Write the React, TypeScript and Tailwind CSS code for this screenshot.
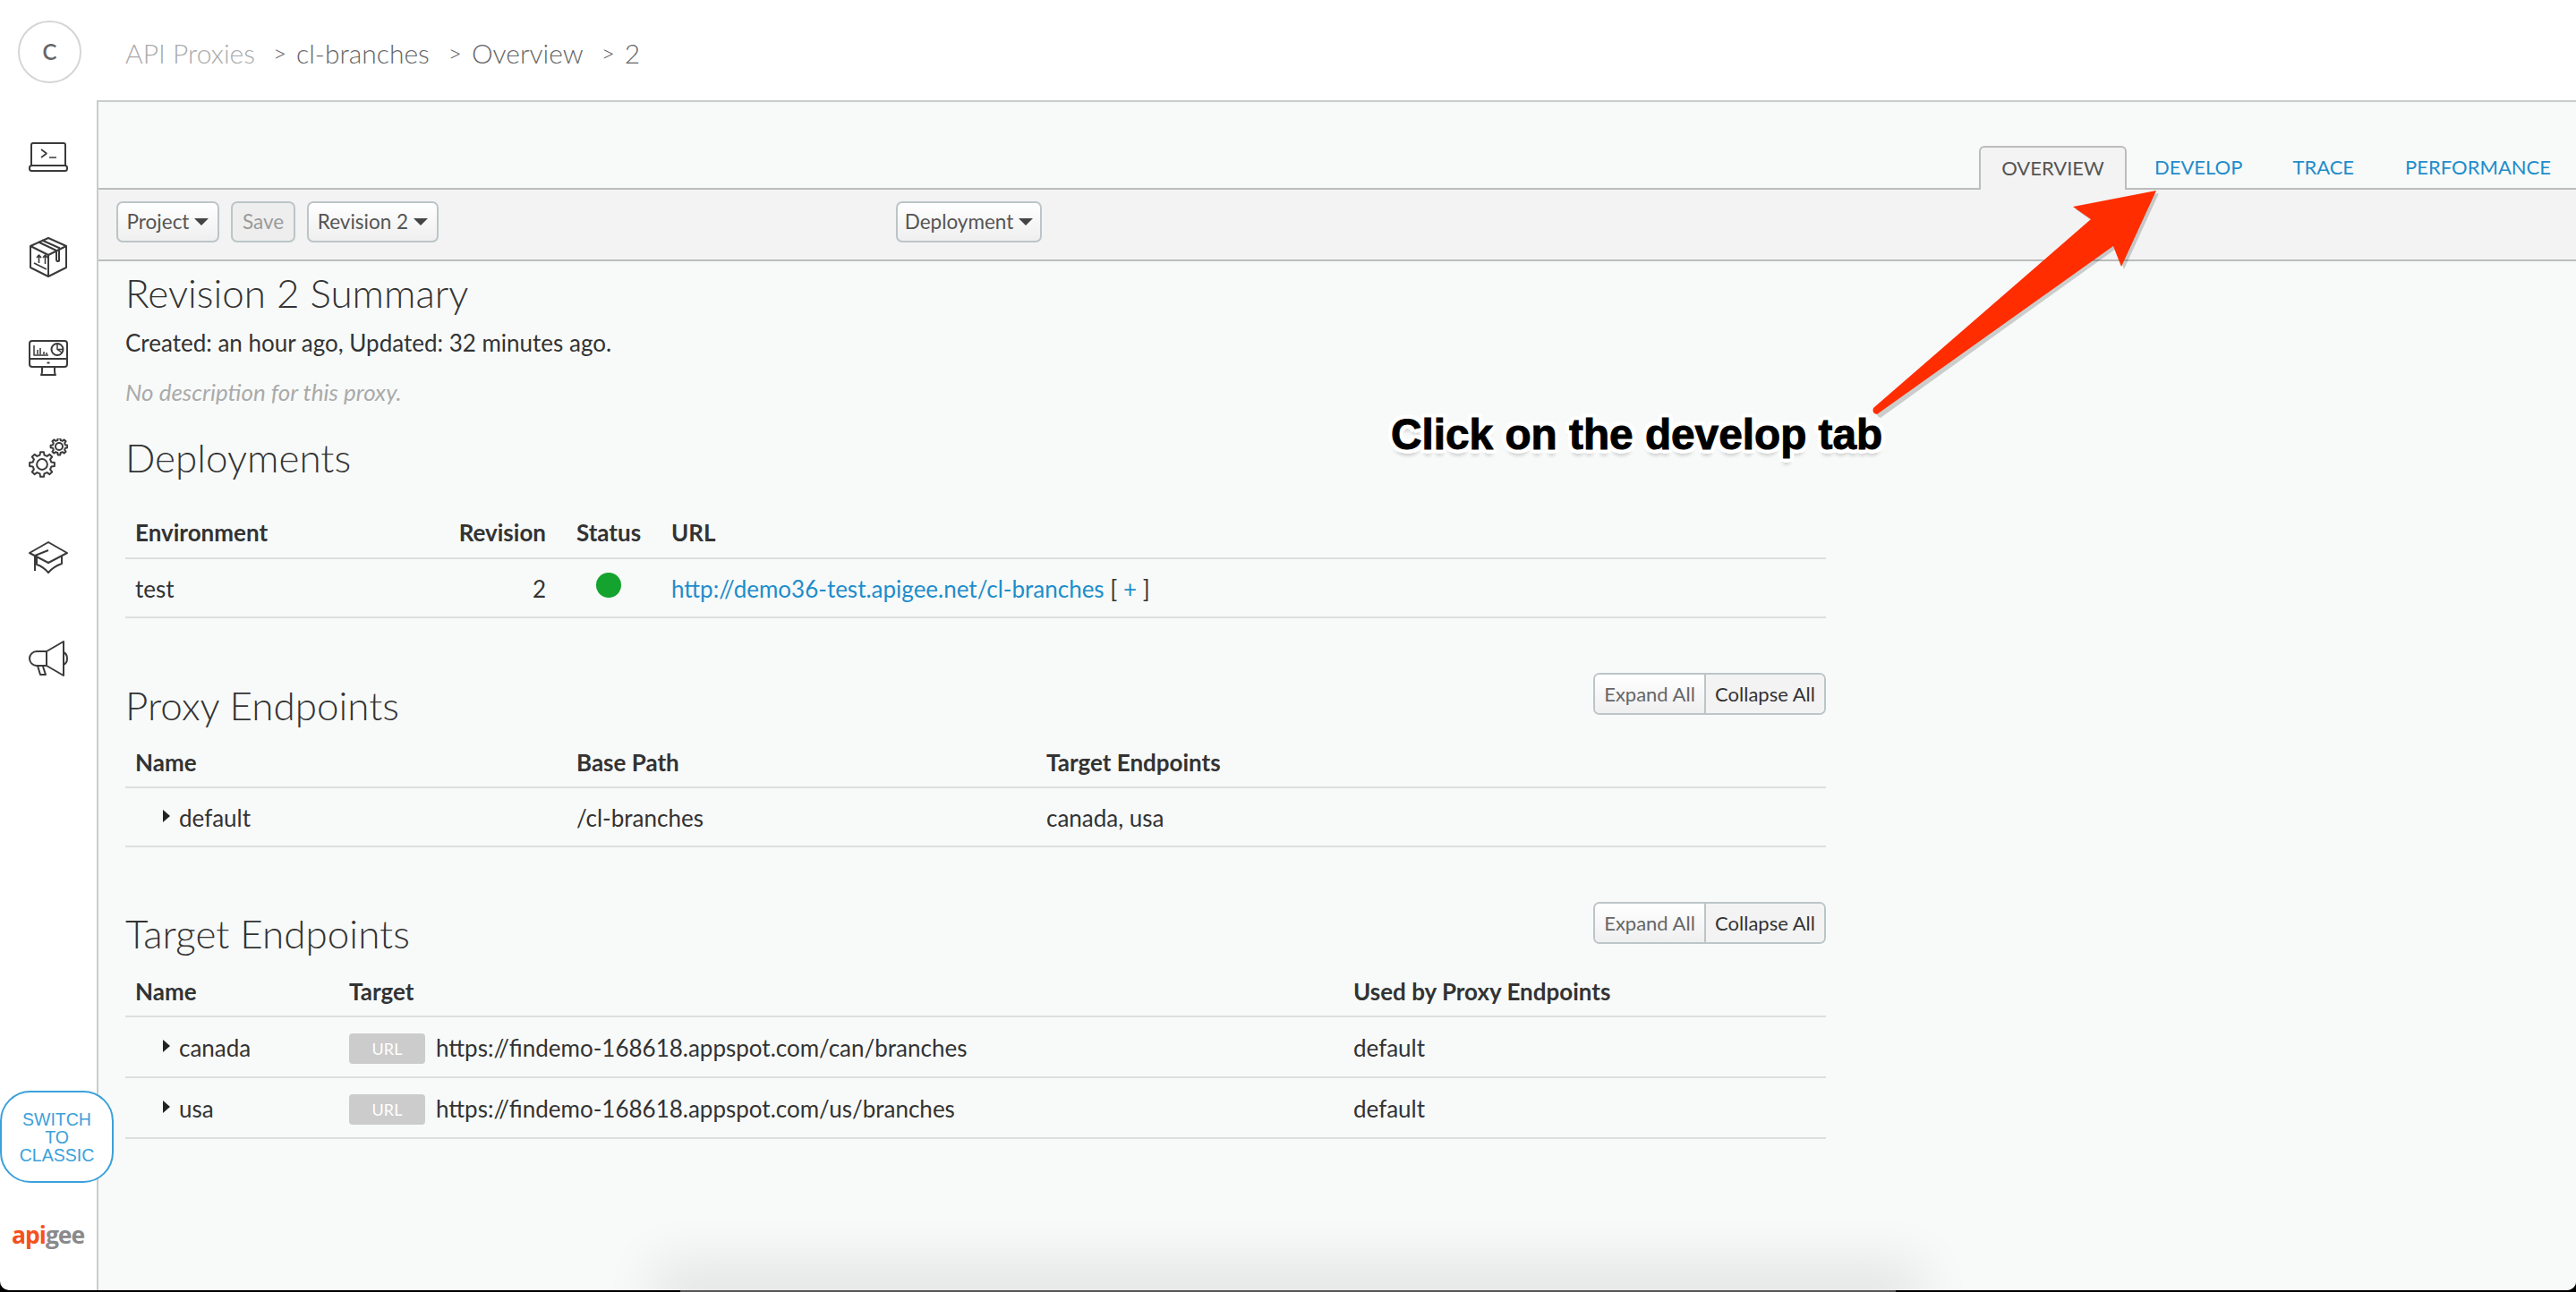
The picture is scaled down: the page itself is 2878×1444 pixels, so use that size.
import React from 'react'

function TerminalIcon() {
  return (
    <svg width="44" height="33" viewBox="0 0 44 33" fill="none" stroke="#3a3a3a" strokeWidth="2" strokeLinejoin="round">
      <path d="M3 26V3a2 2 0 0 1 2-2h34a2 2 0 0 1 2 2v23" />
      <rect x="1" y="26" width="42" height="6" rx="2.5" />
      <path d="M14 8l6 4.5-6 4.5M23 17h8" strokeWidth="1.6" />
    </svg>
  )
}

function PackageIcon() {
  return (
    <svg width="42" height="45" viewBox="0 0 42 45" fill="none" stroke="#3a3a3a" strokeWidth="2" strokeLinejoin="round">
      <path d="M21 1L41 10V34L21 44L1 34V10Z" />
      <path d="M1 10L21 20L41 10M21 20V44" />
      <path d="M10 5.500L30 15M14 3.500L34 12.500" />
      <path d="M30 15V25q0 3 3 1.500v-13" />
      <path d="M8 23l2.500-3 2.500 3M10.500 20v9M15 23l2.500-3 2.500 3M17.500 20v10M5 29l14 7" strokeWidth="1.6" />
    </svg>
  )
}

function MonitorIcon() {
  return (
    <svg width="44" height="40" viewBox="0 0 44 40" fill="none" stroke="#3a3a3a" strokeWidth="2" strokeLinejoin="round">
      <rect x="1" y="1" width="42" height="29" rx="3" />
      <path d="M1 21H43M15 30v4q0 4-1 5h16q-1-1-1-5v-4" />
      <path d="M20.500 25.500h3" />
      <path d="M6 6v11h16M10 16v-5M13 16v-7M17 16v-3M20 16v-2" strokeWidth="1.5" />
      <circle cx="32" cy="10.500" r="6.500" />
      <path d="M32 4v6.500l5 3.500M32 10.500h6" strokeWidth="1.5" />
    </svg>
  )
}

function Gear({ cx, cy, r, teeth }: { cx: number; cy: number; r: number; teeth: number }) {
  let d = ''
  const outer = r
  const inner = r * 0.76
  for (let i = 0; i < teeth; i++) {
    const a = (i / teeth) * Math.PI * 2
    const w = Math.PI / teeth / 2
    const pts = [
      [inner, a - w * 1.2],
      [outer, a - w * 0.7],
      [outer, a + w * 0.7],
      [inner, a + w * 1.2],
    ]
    pts.forEach(([rad, ang], j) => {
      d += `${i === 0 && j === 0 ? 'M' : 'L'}${(cx + rad * Math.cos(ang)).toFixed(2)} ${(cy + rad * Math.sin(ang)).toFixed(2)}`
    })
  }
  return (
    <g>
      <path d={d + 'Z'} />
      <circle cx={cx} cy={cy} r={r * 0.42} />
    </g>
  )
}

function GearsIcon() {
  return (
    <svg width="44" height="44" viewBox="0 0 44 44" fill="none" stroke="#3a3a3a" strokeWidth="2" strokeLinejoin="round">
      <Gear cx={15} cy={29} r={14} teeth={8} />
      <Gear cx={34} cy={9} r={9.500} teeth={8} />
    </svg>
  )
}

function CapIcon() {
  return (
    <svg width="44" height="36" viewBox="0 0 44 36" fill="none" stroke="#3a3a3a" strokeWidth="2" strokeLinejoin="round">
      <path d="M22 1L43 13L22 24L1 13Z" />
      <path d="M9 17V26Q16 28 22 35Q28 28 37 25V17" />
      <path d="M22 10L7 16V33" />
    </svg>
  )
}

function MegaphoneIcon() {
  return (
    <svg width="44" height="40" viewBox="0 0 44 40" fill="none" stroke="#3a3a3a" strokeWidth="2" strokeLinejoin="round">
      <path d="M39 1V39L20 28H9a8 8 0 0 1 0-16h11Z" />
      <path d="M20 12V28M10 28l3 10h6l-3-9" />
      <path d="M39 13q4 2 4 7t-4 7" />
    </svg>
  )
}

function Caret() {
  return <span className="ml-[6px] w-0 h-0 border-l-[8px] border-r-[8px] border-t-[8px] border-l-transparent border-r-transparent border-t-[#444]" />
}

function ToolButton({ label, caret, disabled, className }: { label: string; caret?: boolean; disabled?: boolean; className: string }) {
  return (
    <div
      className={
        'h-[46px] flex items-center justify-center rounded-[7px] border-2 border-[#bcc5c8] text-[22.5px] ' +
        (disabled ? 'bg-[#eeeeee] text-[#9a9a9a] ' : 'bg-gradient-to-b from-white to-[#efefef] text-[#555] ') +
        className
      }
    >
      {label}
      {caret && <Caret />}
    </div>
  )
}

function ExpandCollapse() {
  return (
    <div className="flex w-[260px] h-[47px] rounded-[7px] border-2 border-[#bcc5c8] text-[22px] overflow-hidden">
      <div className="w-[124px] flex items-center justify-center bg-gradient-to-b from-white to-[#efefef] text-[#666] border-r-2 border-[#bcc5c8]">Expand All</div>
      <div className="flex-1 flex items-center justify-center bg-[#f3f3f3] text-[#333]">Collapse All</div>
    </div>
  )
}

function Heading({ children, className }: { children: React.ReactNode; className?: string }) {
  return <h2 className={'flex items-center font-light text-[44px] text-[#333] ' + (className || '')}>{children}</h2>
}

function Expander({ name }: { name: string }) {
  return (
    <div className="flex items-center pl-[31px]">
      <span className="-mt-[5px] mr-[10px] w-0 h-0 border-t-[7px] border-b-[7px] border-l-[8px] border-t-transparent border-b-transparent border-l-[#222]" />
      {name}
    </div>
  )
}

function UrlBadge() {
  return <span className="w-[85px] h-[34px] mr-[12px] mt-[2px] flex items-center justify-center rounded-[4px] bg-[#cccccc] text-white text-[18px]">URL</span>
}

const headRow = 'grid h-[56px] items-center px-[11px] pt-[1px] border-b-2 border-[#dcdfdf] font-bold text-[26px] text-[#333]'
const bodyRow = 'grid items-center px-[11px] pt-[2px] border-b-2 border-[#dcdfdf] text-[26px] text-[#333]'

export default function App() {
  return (
    <div className="relative w-[2878px] h-[1444px] overflow-hidden bg-black font-[Lato,sans-serif]">
      <div className="h-[1442px] bg-white rounded-b-[10px] flex flex-col overflow-hidden">
        <header className="h-[112px] shrink-0 flex items-start">
          <div className="ml-[20px] mt-[23px] w-[71px] h-[70px] rounded-full border-2 border-[#d6d6d6] flex items-center justify-center text-[#666] text-[24px] font-semibold">C</div>
          <nav className="ml-[49px] h-[118px] flex items-center text-[30px] font-light text-[#666]">
            <span className="text-[#aaaaaa]">API Proxies</span>
            <span className="ml-[20px] text-[26px]">&gt;</span>
            <span className="ml-[11px]">cl-branches</span>
            <span className="ml-[21px] text-[26px]">&gt;</span>
            <span className="ml-[11px]">Overview</span>
            <span className="ml-[20px] text-[26px]">&gt;</span>
            <span className="ml-[11px]">2</span>
          </nav>
        </header>

        <div className="flex-1 flex min-h-0">
          <aside className="relative z-10 w-[108px] shrink-0 flex flex-col">
            <div className="pl-[32px] pt-[47px]"><TerminalIcon /></div>
            <div className="pl-[33px] pt-[73px]"><PackageIcon /></div>
            <div className="pl-[32px] pt-[70px]"><MonitorIcon /></div>
            <div className="pl-[32px] pt-[70px]"><GearsIcon /></div>
            <div className="pl-[32px] pt-[71px]"><CapIcon /></div>
            <div className="pl-[32px] pt-[75px]"><MegaphoneIcon /></div>
            <div className="mt-auto w-[127px] h-[103px] rounded-[34px] border-2 border-[#3ba1da] bg-white flex items-center justify-center text-center text-[19.5px] leading-[20px] text-[#3ba1da] font-['Liberation_Sans',sans-serif]">
              SWITCH<br />TO<br />CLASSIC
            </div>
            <div className="mt-[42px] mb-[46px] pl-[13px] h-[32px] flex items-center text-[26.5px] font-bold tracking-[-1px] leading-none font-['Open_Sans',sans-serif]">
              <span className="text-[#f4511e]">api</span><span className="text-[#8a8a8a]">gee</span>
            </div>
          </aside>

          <main className="relative flex-1 border-l-2 border-t-2 border-[#c9cccc] bg-[#f8faf9]">
            <div className="h-[98px] flex items-end justify-end pr-[28px] border-b-2 border-[#bcbcbc]">
              <div className="relative -mb-[2px] w-[165px] h-[49px] pb-[2px] flex items-center justify-center rounded-t-[6px] border-2 border-b-0 border-[#bcbcbc] bg-[#f3f3f3] text-[#555] text-[22px]">OVERVIEW</div>
              <div className="h-[47px] ml-[31px] flex items-center text-[22px] text-[#1f8dcb]">DEVELOP</div>
              <div className="h-[47px] ml-[56px] flex items-center text-[22px] text-[#1f8dcb]">TRACE</div>
              <div className="h-[47px] ml-[57px] flex items-center text-[22px] text-[#1f8dcb]">PERFORMANCE</div>
            </div>
            <div className="h-[80px] flex items-center pl-[20px] pb-[6px] bg-[#f3f3f3] border-b-2 border-[#bcbcbc]">
              <ToolButton label="Project" caret className="w-[115px]" />
              <ToolButton label="Save" disabled className="w-[72px] ml-[13px]" />
              <ToolButton label="Revision 2" caret className="w-[147px] ml-[13px]" />
              <ToolButton label="Deployment" caret className="w-[163px] ml-[511px]" />
            </div>

            <section className="w-[1900px] ml-[30px]">
              <Heading className="h-[70px]">Revision 2 Summary</Heading>
              <p className="mt-[3px] h-[36px] flex items-center text-[26px] text-[#333]">Created: an hour ago, Updated: 32 minutes ago.</p>
              <p className="mt-[19px] h-[36px] flex items-center text-[26px] italic text-[#aaaaaa]">No description for this proxy.</p>
              <Heading className="mt-[26px] h-[58px]">Deployments</Heading>

              <div className={headRow + ' grid-cols-[340px_153px_106px_1fr] mt-[27px] h-[58px]'}>
                <div>Environment</div>
                <div className="text-right pr-[34px]">Revision</div>
                <div>Status</div>
                <div>URL</div>
              </div>
              <div className={bodyRow + ' grid-cols-[340px_153px_106px_1fr] h-[66px]'}>
                <div>test</div>
                <div className="text-right pr-[34px]">2</div>
                <div><div className="ml-[22px] -mt-[9px] w-[28px] h-[28px] rounded-full bg-[#13a32e]" /></div>
                <div className="text-[#1f8dcb]">http://demo36-test.apigee.net/cl-branches <span className="text-[#333]">[</span> + <span className="text-[#333]">]</span></div>
              </div>

              <div className="mt-[61px] h-[73px] flex justify-between">
                <Heading className="h-[66px] mb-[4px] self-end">Proxy Endpoints</Heading>
                <ExpandCollapse />
              </div>
              <div className={headRow + ' grid-cols-[493px_525px_1fr]'}>
                <div>Name</div>
                <div>Base Path</div>
                <div>Target Endpoints</div>
              </div>
              <div className={bodyRow + ' grid-cols-[493px_525px_1fr] h-[66px]'}>
                <Expander name="default" />
                <div>/cl-branches</div>
                <div>canada, usa</div>
              </div>

              <div className="mt-[61px] h-[73px] flex justify-between">
                <Heading className="h-[68px] mb-[4px] self-end">Target Endpoints</Heading>
                <ExpandCollapse />
              </div>
              <div className={headRow + ' grid-cols-[239px_1122px_1fr]'}>
                <div>Name</div>
                <div>Target</div>
                <div>Used by Proxy Endpoints</div>
              </div>
              <div className={bodyRow + ' grid-cols-[239px_1122px_1fr] h-[68px]'}>
                <Expander name="canada" />
                <div className="flex items-center"><UrlBadge />https://findemo-168618.appspot.com/can/branches</div>
                <div>default</div>
              </div>
              <div className={bodyRow + ' grid-cols-[239px_1122px_1fr] h-[68px]'}>
                <Expander name="usa" />
                <div className="flex items-center"><UrlBadge />https://findemo-168618.appspot.com/us/branches</div>
                <div>default</div>
              </div>
            </section>
          </main>
        </div>
      </div>

      {/* window shadow peeking in at the bottom */}
      <div className="absolute left-[760px] top-[1442px] w-[1358px] h-[2px] bg-[#555] shadow-[0_0_60px_30px_rgba(0,0,0,0.09)]" />

      {/* annotation */}
      <svg className="absolute left-0 top-0 pointer-events-none" width="2878" height="1444" fill="none">
        <path d="M2409 213L2316 231L2336 245L2095 456Q2092 462 2098 464L2361 275L2370 298Z" transform="translate(3 3)" fill="#000" opacity="0.18" />
        <path d="M2409 213L2316 231L2336 245L2093 456Q2091 462 2097 463L2361 275L2370 298Z" fill="#ff2d00" />
      </svg>
      <div className="absolute left-[1554px] top-[456px] text-[47.75px] leading-[60px] font-bold text-black whitespace-nowrap font-['Liberation_Sans',sans-serif] [-webkit-text-stroke:1px_black] [text-shadow:5px_0_0_#fff,-5px_0_0_#fff,0_5px_0_#fff,0_-5px_0_#fff,4px_4px_0_#fff,-4px_4px_0_#fff,4px_-4px_0_#fff,-4px_-4px_0_#fff,0_7px_4px_rgba(0,0,0,0.2)]">
        Click on the develop tab
      </div>
    </div>
  )
}
